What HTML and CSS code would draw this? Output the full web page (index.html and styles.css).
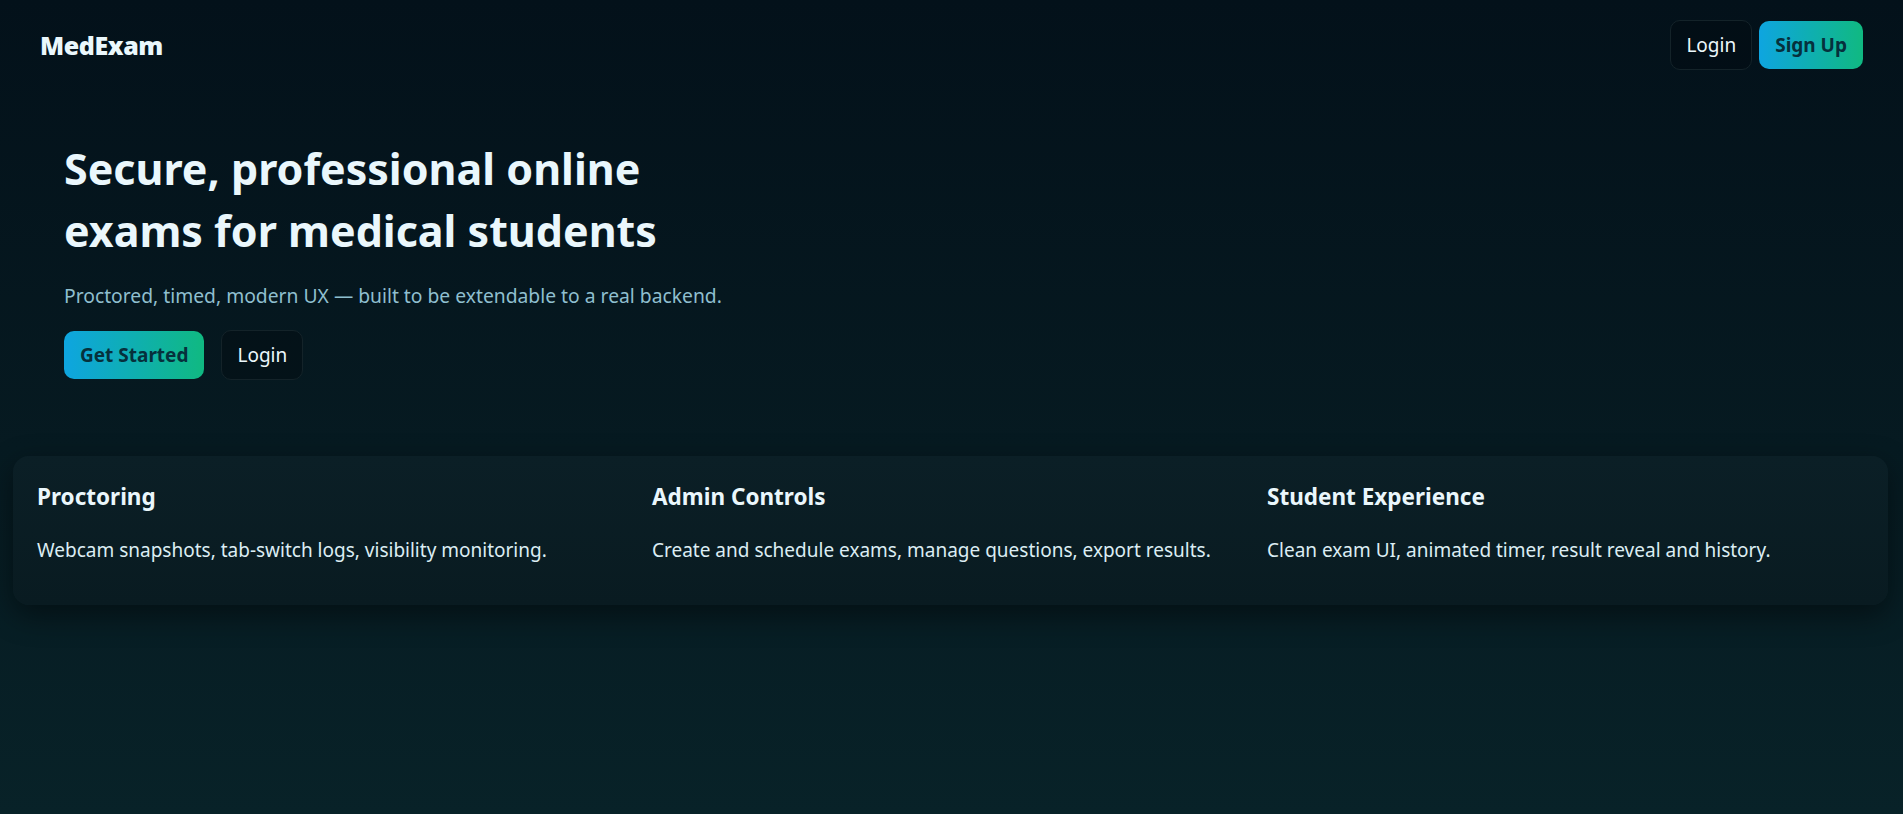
FILE: index.html
```html
<!DOCTYPE html>
<html lang="en">
<head>
<meta charset="utf-8">
<title>MedExam</title>
<link rel="stylesheet" href="styles.css">
</head>
<body>
<header class="topbar">
  <div class="logo">MedExam</div>
  <nav class="nav">
    <a class="btn btn-ghost" href="#">Login</a>
    <a class="btn btn-primary" href="#">Sign Up</a>
  </nav>
</header>
<main>
  <section class="hero">
    <h1 class="hero-title">Secure, professional online exams for medical students</h1>
    <p class="hero-sub">Proctored, timed, modern UX — built to be extendable to a real backend.</p>
    <div class="hero-actions">
      <a class="btn btn-primary" href="#">Get Started</a>
      <a class="btn btn-ghost" href="#">Login</a>
    </div>
  </section>
  <section class="features">
    <div class="feature">
      <h3 class="feature-title">Proctoring</h3>
      <p class="feature-text">Webcam snapshots, tab-switch logs, visibility monitoring.</p>
    </div>
    <div class="feature">
      <h3 class="feature-title">Admin Controls</h3>
      <p class="feature-text">Create and schedule exams, manage questions, export results.</p>
    </div>
    <div class="feature">
      <h3 class="feature-title">Student Experience</h3>
      <p class="feature-text">Clean exam UI, animated timer, result reveal and history.</p>
    </div>
  </section>
</main>
</body>
</html>
```
FILE: styles.css
```css
* { box-sizing: border-box; }
html, body { height: 100%; }
body {
  margin: 0;
  min-height: 814px;
  font-family: "Segoe UI", "Noto Sans", "Open Sans", sans-serif;
  color: #e6f4f9;
  background: linear-gradient(180deg, #03111a 0%, #061a21 55%, #082228 100%);
}
.topbar {
  display: flex;
  align-items: center;
  justify-content: space-between;
  padding: 20px 40px;
}
.logo {
  font-size: 25px;
  font-weight: 900;
  color: #eaf7fc;
  letter-spacing: -0.4px;
}
.nav { display: flex; gap: 7px; align-items: center; }
.btn {
  display: inline-block;
  padding: 12px 16px;
  font-size: 19px;
  line-height: 24px;
  border-radius: 10px;
  text-decoration: none;
  color: #ecf8fc;
}
.btn-ghost {
  padding: 12px 15px;
  border: 1px solid #142329;
  background: rgba(2, 10, 15, 0.4);
}
.btn-primary {
  background: linear-gradient(90deg, #0ea5e0 0%, #10b981 100%);
  color: #06303c;
  font-weight: 700;
}
.hero {
  padding: 48px 64px 0;
}
.hero-title {
  margin: 0;
  max-width: 620px;
  font-size: 43px;
  line-height: 62px;
  font-weight: 700;
  color: #eaf7fc;
}
.hero-sub {
  margin: 20px 0 0;
  font-size: 19.3px;
  line-height: 27px;
  color: #8fbfcf;
}
.hero-actions {
  display: flex;
  align-items: center;
  gap: 17px;
  margin-top: 21px;
}
.features {
  display: grid;
  grid-template-columns: repeat(3, 1fr);
  gap: 18px;
  margin: 76px 15px 0 13px;
  padding: 24px;
  border-radius: 16px;
  background: linear-gradient(180deg, #0b1f26 0%, #091b21 100%);
  box-shadow: 0 10px 30px rgba(0, 0, 0, 0.45);
}
.feature-title {
  margin: 3px 0 26px;
  font-size: 22.5px;
  line-height: 28px;
  font-weight: 700;
  color: #eaf7fc;
}
.feature-text {
  margin: 0 0 17px;
  font-size: 19px;
  line-height: 27px;
  color: #dcedf3;
}
```
